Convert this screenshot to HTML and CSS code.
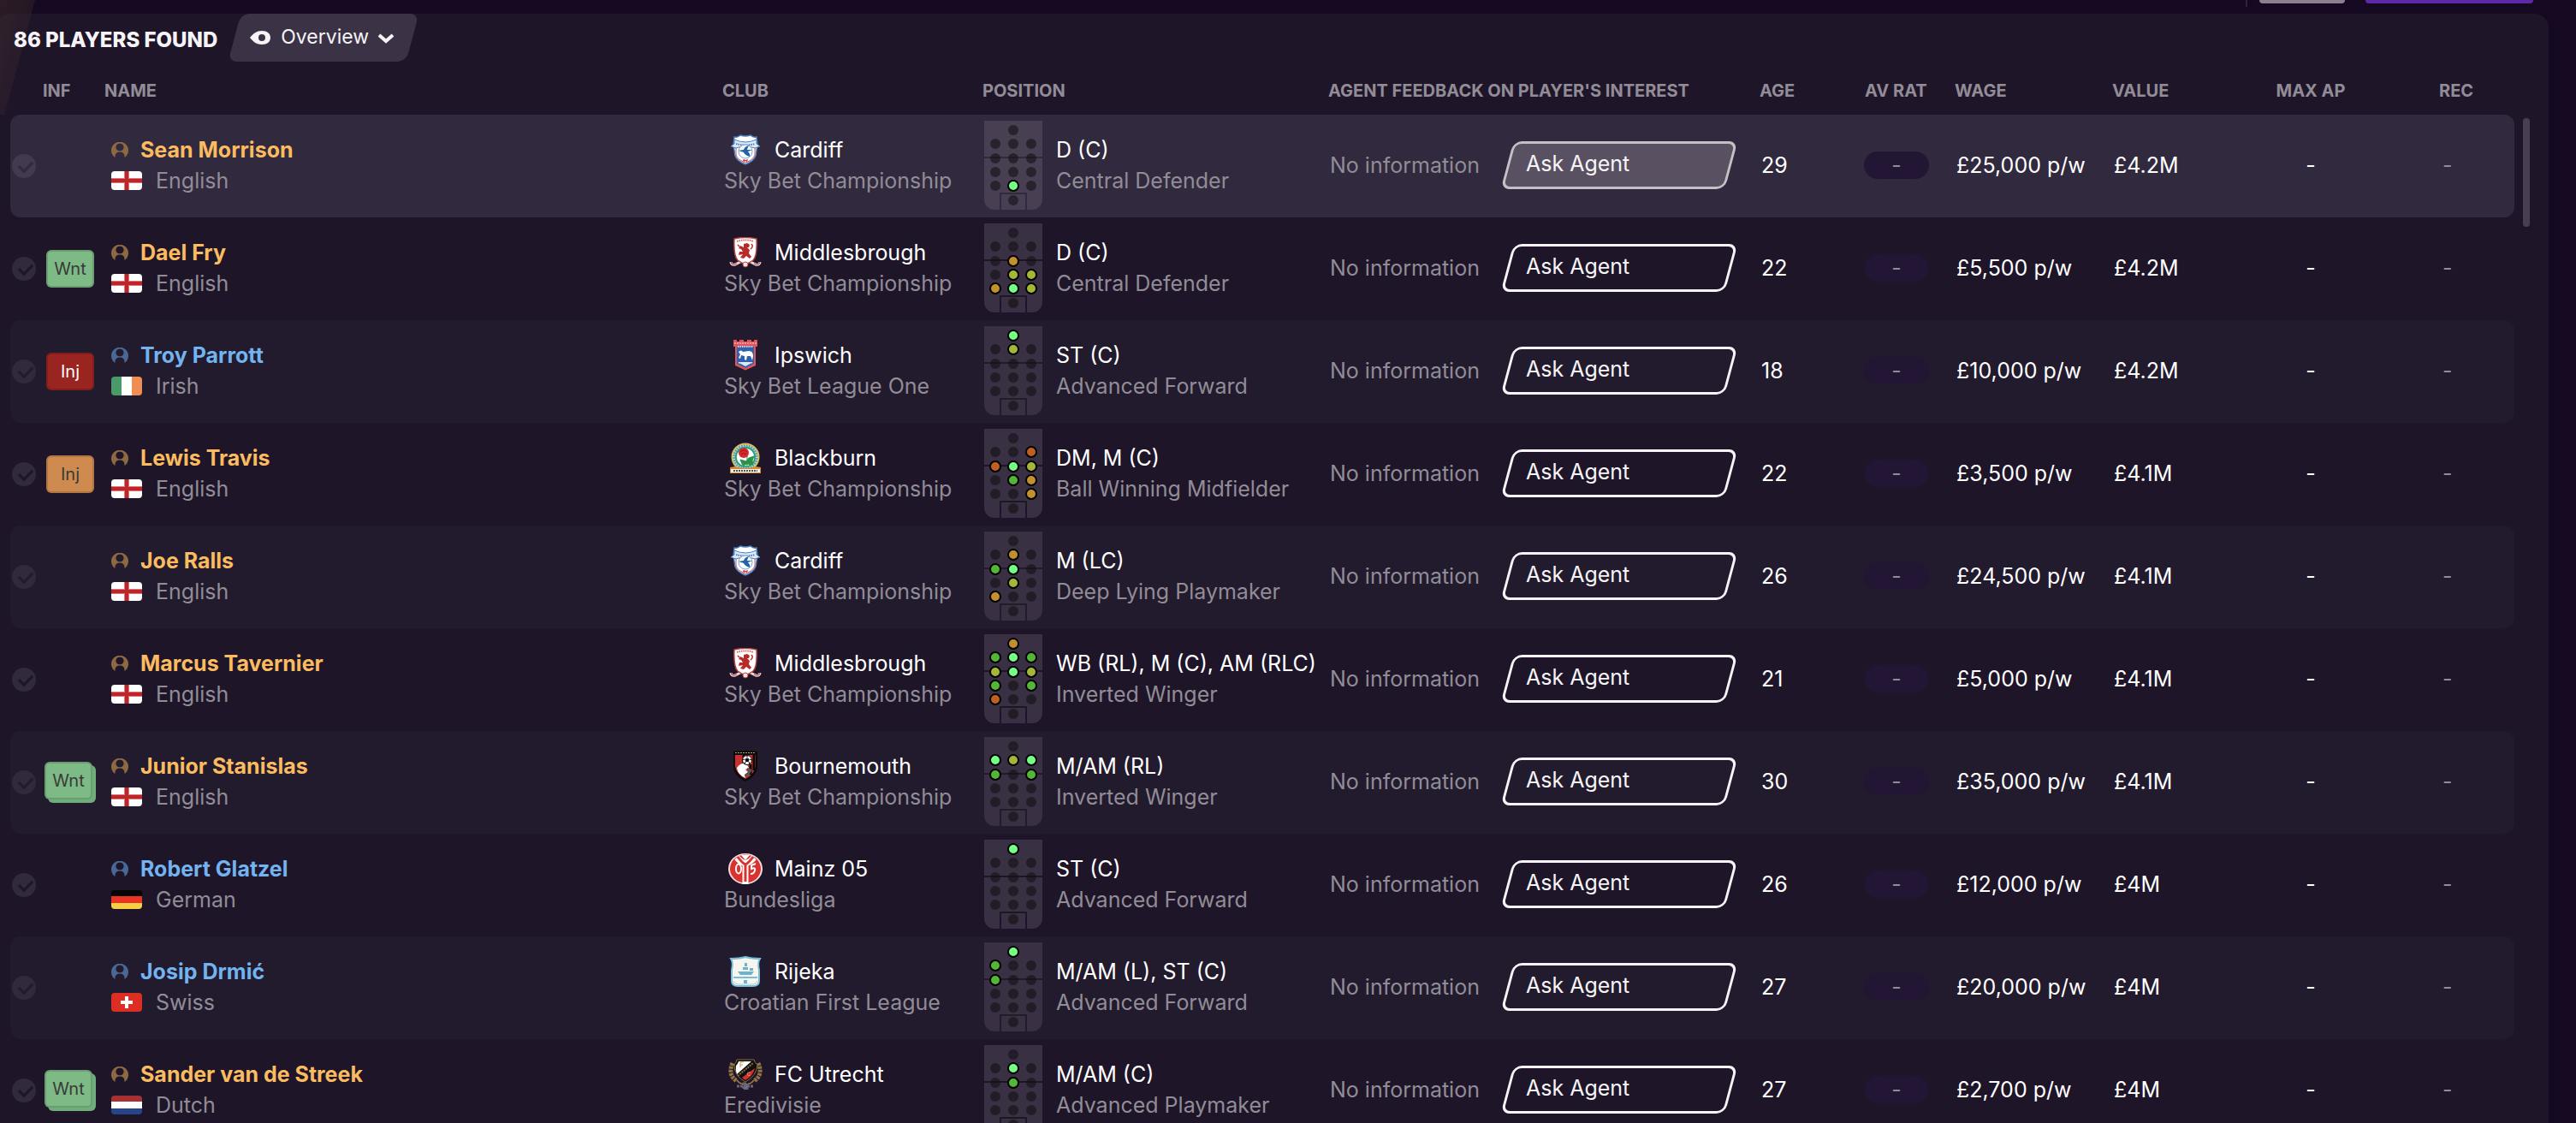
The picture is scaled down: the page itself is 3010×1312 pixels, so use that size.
FILE: index.html
```html
<!DOCTYPE html>
<html lang="en">
<head>
<meta charset="utf-8">
<title>Player Search</title>
<link rel="stylesheet" href="styles.css">
</head>
<body>
<svg class="sprite" aria-hidden="true">
  <symbol id="face" viewBox="0 0 20 18">
    <path fill="currentColor" fill-rule="evenodd" d="M4.500 18A10 10 0 1 1 15.500 18Q16 11.500 10 11.500Q4 11.500 4.500 18ZM10 1.800A4 4.300 0 1 0 10 10.300A4 4.300 0 1 0 10 1.800Z"/>
  </symbol>
  <symbol id="pitch" viewBox="0 0 68 104">
    <path class="turf" d="M0 0H68V92A12 12 0 0 1 56 104H12A12 12 0 0 1 0 92Z"/>
    <path class="lines" d="M0 43H68M19 104V85H49V104"/>
    <g class="spots">
      <circle cx="34" cy="11" r="6"/>
      <circle cx="13" cy="27" r="6"/><circle cx="34" cy="27" r="6"/><circle cx="55" cy="27" r="6"/>
      <circle cx="13" cy="44" r="6"/><circle cx="34" cy="44" r="6"/><circle cx="55" cy="44" r="6"/>
      <circle cx="13" cy="60" r="6"/><circle cx="34" cy="60" r="6"/><circle cx="55" cy="60" r="6"/>
      <circle cx="13" cy="76" r="6"/><circle cx="34" cy="76" r="6"/><circle cx="55" cy="76" r="6"/>
      <circle cx="34" cy="93" r="6"/>
    </g>
  </symbol>

  <symbol id="flag-english" viewBox="0 0 36 22">
    <rect width="36" height="22" fill="#fff"/>
    <path d="M0 11H36M18 0V22" stroke="#d9777a" stroke-width="6"/>
    <path d="M0 11H36M18 0V22" stroke="#bd2529" stroke-width="4"/>
  </symbol>
  <symbol id="flag-irish" viewBox="0 0 36 22">
    <rect width="12" height="22" fill="#4b9a69"/><rect x="12" width="12" height="22" fill="#fff"/><rect x="24" width="12" height="22" fill="#ee8e52"/>
  </symbol>
  <symbol id="flag-german" viewBox="0 0 36 22">
    <rect width="36" height="7" fill="#050505"/><rect y="7" width="36" height="8" fill="#e93423"/><rect y="15" width="36" height="7" fill="#f5cf45"/>
  </symbol>
  <symbol id="flag-swiss" viewBox="0 0 36 22">
    <rect width="36" height="22" fill="#dc2e22"/><path d="M18 4V18M11 11H25" stroke="#fff" stroke-width="4"/>
  </symbol>
  <symbol id="flag-dutch" viewBox="0 0 36 22">
    <rect width="36" height="7" fill="#a53133"/><rect y="7" width="36" height="8" fill="#fff"/><rect y="15" width="36" height="7" fill="#274486"/>
  </symbol>

  <symbol id="crest-cardiff" viewBox="0 0 36 36">
    <path d="M5 3Q9 4 12 1Q18 3 24 1Q27 4 31 3L32 12L30 25Q28 31 18 35Q8 31 6 25L4 12Z" fill="#fff" stroke="#4a80bd" stroke-width="1.500"/>
    <path d="M7 15V24Q9 30 18 33Q27 30 29 24V15" fill="none" stroke="#c9565c" stroke-width="1"/>
    <path d="M1 14L5 11L5 6Q18 12 31 6L31 11L35 14L29 16Q18 12 7 16Z" fill="#dfeaf6" stroke="#4a80bd" stroke-width="1"/>
    <path d="M7 11Q18 14 29 11" fill="none" stroke="#4a80bd" stroke-width="2" stroke-dasharray="1.500 1"/>
    <circle cx="18" cy="20" r="8" fill="#fff" stroke="#7ba6d4" stroke-width="1"/>
    <path d="M10 19Q14 18 16 18Q17 14 22 13Q20 17 20 18L26 18L21 20Q24 23 23 26Q17 24 16 21Z" fill="#2264a8"/>
    <path d="M15 30L16 29L18 30L21 29L20 32L18 31L16 32Z" fill="#c33"/>
  </symbol>
  <symbol id="crest-middlesbrough" viewBox="0 0 36 36">
    <path d="M1 29Q1 33 6 32L14 28L22 28L30 32Q35 33 35 29" fill="none" stroke="#e9d4d2" stroke-width="3"/>
    <path d="M1 29Q2 34 8 31M35 29Q34 34 28 31" fill="none" stroke="#b8433f" stroke-width="1"/>
    <path d="M5 2Q18 -1 31 2Q32 22 27 27Q23 30 18 32Q13 30 9 27Q4 22 5 2Z" fill="#fff" stroke="#b5423f" stroke-width="1.500"/>
    <path d="M8 5Q18 2 28 5" fill="none" stroke="#cf6a66" stroke-width="2" stroke-dasharray="1.500 1"/>
    <path d="M16 8L20 7L23 9L22 12L20 12L23 15L22 19L25 23L23 25L19 22L16 25L12 24L15 20L10 21L11 17L15 17L13 14L10 13L12 10L16 12Z" fill="#b82c28"/>
    <path d="M24 14Q28 11 25 8M11 11L9 9" fill="none" stroke="#b82c28" stroke-width="1.500"/>
    <circle cx="18" cy="32" r="3" fill="#f4e6e4" stroke="#b5423f" stroke-width="1"/>
  </symbol>
  <symbol id="crest-ipswich" viewBox="0 0 36 36">
    <path d="M4 0H8V2H11V0H16V2H20V0H25V2H28V0H32V8H30V30L18 35.500L6 30V8H4Z" fill="#e0545a"/>
    <path d="M8 8H28V28L18 33L8 28Z" fill="#2f62ae"/>
    <path d="M5 4H31M10 27H26" stroke="#f7aab0" stroke-width="1.500" stroke-dasharray="2 1"/>
    <path d="M9 8H27" stroke="#bfd0ec" stroke-width="2" stroke-dasharray="1.500 1"/>
    <path d="M9 26H27L18 31Z" fill="#dfe7f5"/>
    <path d="M10 14Q13 11 15 14L22 13Q27 13 27 19L26 24L24 19L20 19L19 24L17 23L17 19L13 18L12 22L10 21L12 17Z" fill="#fff"/>
  </symbol>
  <symbol id="crest-blackburn" viewBox="0 0 36 36">
    <circle cx="18" cy="17" r="15.500" fill="#45a3d0" stroke="#d6b85a" stroke-width="2"/>
    <circle cx="18" cy="17" r="13.500" fill="none" stroke="#dfe68f" stroke-width="3" stroke-dasharray="1 2"/>
    <circle cx="18" cy="17" r="11" fill="#fff" stroke="#2d9b6d" stroke-width="1.500"/>
    <path d="M20 14L20 27M19 22L12 20L15 27L20 25L27 26L26 21L28 16L22 18Z" fill="#2c9149" stroke="#2c9149" stroke-width="1"/>
    <circle cx="16" cy="12" r="6" fill="#d52b2b"/><path d="M12 11Q16 7 20 11M13 14Q16 11 19 14" fill="none" stroke="#971818" stroke-width="1"/>
    <path d="M0 29L6 28Q18 32 30 28L36 29V36H0Z" fill="#d5893b"/>
    <rect x="1" y="31" width="34" height="4" fill="#f4f3df"/><path d="M4 33H32" stroke="#54514a" stroke-width="2" stroke-dasharray="2 1"/>
  </symbol>
  <symbol id="crest-bournemouth" viewBox="0 0 36 36">
    <path d="M4 1Q18 -1 32 1V18Q32 29 18 36Q4 29 4 18Z" fill="#0d0a0b"/>
    <path d="M6 5H30V18Q29 27 18 33Q7 27 6 18Z" fill="#c92f2c"/>
    <path d="M6 2.500H30" stroke="#a99b72" stroke-width="1" stroke-dasharray="2 1"/>
    <path d="M16 5V20M24 16V28M28 5V23" stroke="#0d0a0b" stroke-width="3"/>
    <path d="M8 20Q12 14 19 15L22 20L18 22L21 25L17 28L18 32Q9 28 8 20Z" fill="#fff"/>
    <path d="M20 20L26 22L22 29L18 31L17 28L21 25Z" fill="#57565a"/>
    <circle cx="20" cy="11" r="5.500" fill="#fff" stroke="#0d0a0b" stroke-width="1"/>
    <path d="M20 9L22 10L21.500 12.500H18.500L18 10ZM20 6V8M14.500 11L17 10M25.500 11L23 10M17 16L18 13M23 16L22 13" fill="#0d0a0b" stroke="#0d0a0b" stroke-width="1"/>
  </symbol>
  <symbol id="crest-mainz" viewBox="0 0 40 36">
    <ellipse cx="20" cy="18" rx="20" ry="18" fill="#f5dedd"/>
    <ellipse cx="20" cy="18" rx="18" ry="16.500" fill="#d9322f"/>
    <path d="M10 5Q14 10 20 12Q26 10 30 5M20 11V36" fill="none" stroke="#fff" stroke-width="7"/>
    <path d="M11 4Q16 11 20 13Q24 11 29 4M20 12V33" fill="none" stroke="#d9322f" stroke-width="3"/>
    <path d="M15 2H25L20 8Z" fill="#fff"/>
    <ellipse cx="12" cy="18" rx="3" ry="5.500" fill="none" stroke="#fff" stroke-width="2"/>
    <path d="M32 12L27 14V18Q32 16 31 20Q30 24 26 24" fill="none" stroke="#fff" stroke-width="2"/>
  </symbol>
  <symbol id="crest-rijeka" viewBox="0 0 36 36">
    <path d="M1 3Q11 3 18 1Q25 3 35 3Q32 8 34 16L34 29Q34 35 27 35H9Q2 35 2 29V16Q4 8 1 3Z" fill="#f6f5ee" stroke="#79bdd8" stroke-width="2"/>
    <path d="M4 25H32" stroke="#79bdd8" stroke-width="2"/>
    <path d="M9 18H28L25 22H12ZM15 13H21V16H15ZM14 17H22M17 8H20V12H17ZM23 14H27V17H23ZM16 28H20V32H16Z" fill="#6db3d0"/>
    <path d="M4 29Q5 33 10 33H26Q31 33 32 29" fill="none" stroke="#a6d3e4" stroke-width="1"/>
  </symbol>
  <symbol id="crest-utrecht" viewBox="0 0 40 36">
    <path d="M5 5Q-1 19 10 26M35 5Q41 19 30 26" fill="none" stroke="#927443" stroke-width="5" stroke-dasharray="3 1"/>
    <path d="M10 25Q14 30 20 30Q26 30 30 25" fill="none" stroke="#927443" stroke-width="2"/>
    <path d="M10 1H30Q31 5 34 7Q33 20 20 27Q7 20 7 7Q9 5 10 1Z" fill="#110e10" stroke="#8a6e40" stroke-width="1"/>
    <path d="M12 3H27L10 18Q8 13 9 8Q11 6 12 3Z" fill="#fff"/>
    <path d="M31 11Q29 20 20 25L16 22Z" fill="#d52f34"/>
    <path d="M11 20L29 5" stroke="#8a6e40" stroke-width="2" stroke-dasharray="2 1"/>
    <path d="M14 10V4H18M14 7H17M26 16Q22 15 22 18Q23 21 26 19" fill="none" stroke="#c99b59" stroke-width="1"/>
    <path d="M10 32H30M18 29H22V36H18Z" stroke="#6a6577" fill="#8d8797" stroke-width="3" stroke-dasharray="3 1"/>
  </symbol>
</svg>

<div class="toolbar">
  <span class="divider"></span>
  <button class="tool outline" type="button" aria-label="Filter"></button>
  <button class="tool primary" type="button" aria-label="New search"></button>
</div>

<main class="panel">
  <header class="panel-head">
    <h1>86 PLAYERS FOUND</h1>
    <div class="view">
      <svg class="eye" viewBox="0 0 24 16" aria-hidden="true"><path fill="currentColor" fill-rule="evenodd" d="M0 8C4 3 8 0 14 0C20 0 24 3 24 8C24 13 20 16 14 16C8 16 4 13 0 8ZM14 4A4 4 0 1 0 14 12A4 4 0 1 0 14 4Z"/></svg>
      <select aria-label="View"><option>Overview</option></select>
      <svg class="chevron" viewBox="0 0 20 12" aria-hidden="true"><path d="M2 2L10 9L18 2" fill="none" stroke="currentColor" stroke-width="4"/></svg>
    </div>
  </header>
  <div class="list">
    <table>
      <colgroup>
        <col class="c-check"><col class="c-inf"><col class="c-name"><col class="c-club"><col class="c-position"><col class="c-agent"><col class="c-age"><col class="c-rating"><col class="c-wage"><col class="c-value"><col class="c-ap"><col class="c-rec">
      </colgroup>
      <thead>
        <tr>
          <th></th><th>INF</th><th>NAME</th><th>CLUB</th><th>POSITION</th><th>AGENT FEEDBACK ON PLAYER'S INTEREST</th><th>AGE</th><th>AV RAT</th><th>WAGE</th><th>VALUE</th><th class="center">MAX AP</th><th class="rec">REC</th>
        </tr>
      </thead>
      <tbody id="players"></tbody>
    </table>
    <div class="track"><div class="thumb"></div></div>
  </div>
</main>
<script src="players.js"></script>
</body>
</html>
```

FILE: styles.css
```css
* { box-sizing: border-box; }

body {
  margin: 0;
  height: 100vh;
  overflow: hidden;
  display: flex;
  flex-direction: column;
  color: #fff;
  font: 25px/36px Inter, "Liberation Sans", sans-serif;
  background: linear-gradient(105deg, #2b1c26 0, #241724 39px, transparent 40px) #140920;
}

.sprite { position: absolute; width: 0; height: 0; }

.toolbar {
  flex: none;
  height: 16px;
  padding-right: 50px;
  display: flex;
  justify-content: flex-end;
  align-items: flex-start;
}
.divider { width: 2px; height: 8px; margin-right: 14px; background: #2e243a; }
.tool { height: 4px; padding: 0; border: 0; border-radius: 0 0 8px 8px; }
.outline { width: 100px; margin-right: 24px; background: #8a8090; }
.primary { width: 196px; background: #5c2aa8; }

.panel {
  flex: 1;
  min-height: 0;
  margin: 0 32px 0 -4px;
  padding: 0 22px 0 16px;
  overflow: hidden;
  border-radius: 16px 16px 0 0;
  background: linear-gradient(105deg, #30222c 0, #281b2a 39px, transparent 40px) 0 0 / 80px 118px no-repeat #1e1529;
}

.panel-head { display: flex; height: 56px; padding-left: 4px; gap: 14px; }
h1 { margin: 0; padding-top: 13px; font-size: 24px; line-height: 36px; font-weight: 800; color: #f6f4f7; }

.view {
  position: relative;
  display: flex;
  align-items: center;
  width: 220px;
  padding: 0 24px;
  color: #f6f4f7;
  isolation: isolate;
}
.view::before {
  content: "";
  position: absolute;
  inset: 0 6px;
  z-index: -1;
  border-radius: 10px;
  background: #3b3345;
  transform: skewX(-15deg);
}
.view svg { flex: none; }
.eye { width: 24px; height: 16px; margin-right: 12px; }
.chevron { width: 20px; height: 12px; margin-top: 2px; }
.view select {
  appearance: none;
  flex: none;
  width: 113px;
  padding: 0 0 2px;
  border: 0;
  background: none;
  color: inherit;
  font: 23px/36px Inter, sans-serif;
}

.list { display: flex; gap: 10px; }
table {
  flex: 1;
  min-width: 0;
  table-layout: fixed;
  border-collapse: collapse;
  white-space: nowrap;
}
.c-check { width: 38px; }
.c-inf { width: 72px; }
.c-club { width: 304px; }
.c-position { width: 404px; }
.c-agent { width: 504px; }
.c-age { width: 123px; }
.c-rating { width: 105px; }
.c-wage { width: 184px; }
.c-value { width: 132px; }
.c-ap { width: 200px; }
.c-rec { width: 138px; }

th {
  height: 62px;
  padding: 5px 0 0;
  text-align: left;
  font-size: 20px;
  line-height: 24px;
  font-weight: 700;
  color: #918c96;
}
th.rec { padding-left: 50px; }
th.center, td.center { text-align: center; }

td { height: 120px; padding: 0 0 2px 2px; }
tbody tr { background: var(--row); --row: #1e1529; --turf: #393143; }
tbody tr:nth-child(odd) { --row: #221a2d; }
tbody tr.selected { --row: #31293e; --turf: #484052; }
td:first-child { border-radius: 12px 0 0 12px; }
td:last-child { border-radius: 0 12px 12px 0; }
td.inf { padding: 0 0 0 4px; }
td.check { padding-bottom: 0; }
td.name { padding-left: 8px; }
td.rec { padding-left: 54px; }
td.center { padding-left: 0; }
.muted, td.rec, .rating { color: #918c96; }

.check input {
  appearance: none;
  display: block;
  position: relative;
  width: 28px;
  height: 28px;
  margin: 0;
  border-radius: 50%;
  background: #31293c;
}
.selected .check input { background: #423a4e; }
.check input::after {
  content: "";
  position: absolute;
  left: 8px;
  top: 8px;
  width: 13px;
  height: 7px;
  border: solid var(--row);
  border-width: 0 0 3px 3px;
  transform: rotate(-45deg);
}

.badge {
  display: block;
  width: 56px;
  height: 44px;
  border: 2px solid rgba(0, 0, 0, .15);
  border-radius: 6px;
  text-align: center;
  font-size: 20px;
  line-height: 40px;
  color: #3a3a38;
}
.wnt { background: #7dba86; }
.inj { background: #992420; color: #fff; }
.knock { background: #cf8b4f; }
.stack { margin: -4px 0 0 -2px; box-shadow: 4px 4px 0 #6fae7b; }

.line { display: flex; align-items: center; }
.line svg { flex: none; }
.face { width: 20px; height: 18px; margin-right: 14px; color: #8c6843; }
.name strong { font-weight: 700; color: #fbbb60; }
.blue .name strong { color: #72b3f0; }
.blue .face { color: #4a6895; }
.flag { width: 36px; height: 22px; margin-right: 16px; border-radius: 4px; }
.crest { width: 50px; height: 36px; margin-right: 9px; }

.position-cell { display: flex; align-items: center; gap: 16px; }
.pitch { flex: none; width: 68px; height: 104px; }
.turf { fill: var(--turf); }
.lines { fill: none; stroke: var(--row); stroke-width: 2; }
.spots { fill: #120f12; fill-opacity: .6; }
.pitch > circle { stroke: #000; stroke-width: 2; }
.natural { fill: #74ff85; }
.good { fill: #54b638; }
.fair { fill: #a5b739; }
.weak { fill: #c48f2f; }
.poor { fill: #be6024; }

.feedback { display: flex; align-items: center; gap: 26px; }
.ask {
  position: relative;
  width: 274px;
  height: 56px;
  padding: 0 28px 4px;
  border: 0;
  background: none;
  color: #f6f4f7;
  font: inherit;
  text-align: left;
  isolation: isolate;
}
.ask::before {
  content: "";
  position: absolute;
  inset: 0 6px;
  z-index: -1;
  border: 3px solid #f6f4f7;
  border-radius: 10px;
  transform: skewX(-15deg);
}
.selected .ask::before { border-color: #c4c0c4; background: #595162; }

.rating {
  width: 76px;
  height: 32px;
  margin-left: -3px;
  border-radius: 16px;
  background: #231634;
  text-align: center;
  line-height: 32px;
}

.track { flex: none; width: 8px; padding-top: 66px; }
.thumb { height: 127px; border-radius: 4px; background: #484052; }
```

FILE: players.js
```javascript
// Spots are [column, line, familiarity]; columns run left to right, lines from striker back.
const COLUMNS = [13, 34, 55];
const LINES = [11, 27, 44, 60, 76, 93];
const N = 'natural', G = 'good', F = 'fair', W = 'weak', P = 'poor';
const CHAMPIONSHIP = 'Sky Bet Championship';

const players = [
  { name: 'Sean Morrison', nation: 'English', club: 'Cardiff', league: CHAMPIONSHIP, position: 'D (C)', role: 'Central Defender', spots: [[1, 4, N]], age: 29, wage: '£25,000', value: '£4.2M', row: 'selected' },
  { name: 'Dael Fry', nation: 'English', club: 'Middlesbrough', league: CHAMPIONSHIP, position: 'D (C)', role: 'Central Defender', spots: [[1, 2, W], [1, 3, F], [2, 3, F], [0, 4, W], [1, 4, N], [2, 4, F]], age: 22, wage: '£5,500', value: '£4.2M', badge: ['wnt', 'Wnt'] },
  { name: 'Troy Parrott', nation: 'Irish', club: 'Ipswich', league: 'Sky Bet League One', position: 'ST (C)', role: 'Advanced Forward', spots: [[1, 0, N], [1, 1, F]], age: 18, wage: '£10,000', value: '£4.2M', badge: ['inj', 'Inj'], row: 'blue' },
  { name: 'Lewis Travis', nation: 'English', club: 'Blackburn', league: CHAMPIONSHIP, position: 'DM, M (C)', role: 'Ball Winning Midfielder', spots: [[2, 1, P], [0, 2, P], [1, 2, N], [2, 2, F], [1, 3, G], [2, 3, W], [2, 4, W]], age: 22, wage: '£3,500', value: '£4.1M', badge: ['knock', 'Inj'] },
  { name: 'Joe Ralls', nation: 'English', club: 'Cardiff', league: CHAMPIONSHIP, position: 'M (LC)', role: 'Deep Lying Playmaker', spots: [[1, 1, W], [0, 2, G], [1, 2, N], [1, 3, F], [0, 4, W]], age: 26, wage: '£24,500', value: '£4.1M' },
  { name: 'Marcus Tavernier', nation: 'English', club: 'Middlesbrough', league: CHAMPIONSHIP, position: 'WB (RL), M (C), AM (RLC)', role: 'Inverted Winger', spots: [[1, 0, W], [0, 1, G], [1, 1, N], [2, 1, G], [0, 2, F], [1, 2, N], [2, 2, F], [0, 3, G], [2, 3, G], [0, 4, P]], age: 21, wage: '£5,000', value: '£4.1M' },
  { name: 'Junior Stanislas', nation: 'English', club: 'Bournemouth', league: CHAMPIONSHIP, position: 'M/AM (RL)', role: 'Inverted Winger', spots: [[0, 1, N], [1, 1, F], [2, 1, N], [0, 2, G], [2, 2, G]], age: 30, wage: '£35,000', value: '£4.1M', badge: ['wnt stack', 'Wnt'] },
  { name: 'Robert Glatzel', nation: 'German', club: 'Mainz 05', league: 'Bundesliga', position: 'ST (C)', role: 'Advanced Forward', spots: [[1, 0, N]], age: 26, wage: '£12,000', value: '£4M', row: 'blue' },
  { name: 'Josip Drmić', nation: 'Swiss', club: 'Rijeka', league: 'Croatian First League', position: 'M/AM (L), ST (C)', role: 'Advanced Forward', spots: [[1, 0, N], [0, 1, G], [0, 2, G]], age: 27, wage: '£20,000', value: '£4M', row: 'blue' },
  { name: 'Sander van de Streek', nation: 'Dutch', club: 'FC Utrecht', league: 'Eredivisie', position: 'M/AM (C)', role: 'Advanced Playmaker', spots: [[1, 1, N], [1, 2, G]], age: 27, wage: '£2,700', value: '£4M', badge: ['wnt stack', 'Wnt'] }
];

const crestId = club => 'crest-' + club.replace('FC ', '').split(' ')[0].toLowerCase();

const row = p => `
  <tr class="${p.row || ''}">
    <td class="check"><input type="checkbox" aria-label="Select ${p.name}"></td>
    <td class="inf">${p.badge ? `<span class="badge ${p.badge[0]}">${p.badge[1]}</span>` : ''}</td>
    <td class="name">
      <div class="line"><svg class="face"><use href="#face"/></svg><strong>${p.name}</strong></div>
      <div class="line muted"><svg class="flag"><use href="#flag-${p.nation.toLowerCase()}"/></svg>${p.nation}</div>
    </td>
    <td>
      <div class="line"><svg class="crest"><use href="#${crestId(p.club)}"/></svg>${p.club}</div>
      <div class="muted">${p.league}</div>
    </td>
    <td>
      <div class="position-cell">
        <svg class="pitch" viewBox="0 0 68 104"><use href="#pitch"/>${p.spots.map(([c, l, level]) =>
          `<circle class="${level}" cx="${COLUMNS[c]}" cy="${LINES[l]}" r="6"/>`).join('')}</svg>
        <div>${p.position}<div class="muted">${p.role}</div></div>
      </div>
    </td>
    <td><div class="feedback"><span class="muted">No information</span><button class="ask" type="button">Ask Agent</button></div></td>
    <td>${p.age}</td>
    <td><div class="rating">-</div></td>
    <td>${p.wage} p/w</td>
    <td>${p.value}</td>
    <td class="center">-</td>
    <td class="rec">-</td>
  </tr>`;

document.getElementById('players').innerHTML = players.map(row).join('');
```
